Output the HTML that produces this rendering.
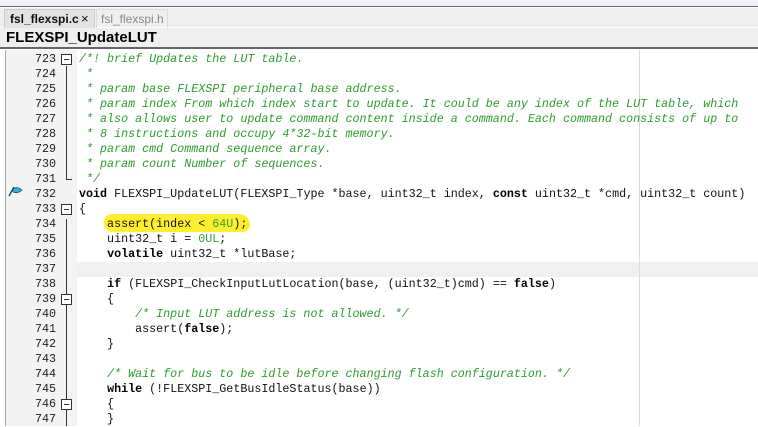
<!DOCTYPE html>
<html><head><meta charset="utf-8"><style>
*{margin:0;padding:0;box-sizing:border-box}
body{width:758px;height:426px;overflow:hidden;background:#fff;font-family:"Liberation Sans",sans-serif;position:relative}
.top{position:absolute;left:0;top:0;width:758px;height:7px;background:#eef0fb;border-bottom:1px solid #666}
.tabs{position:absolute;left:0;top:8px;width:758px;height:20px;background:#efefef;border-bottom:1px solid #fff}
.tab1{position:absolute;left:4px;top:1px;width:91px;height:19px;background:#e2e2e2;border:1px solid #ccc;border-bottom:none;font-size:12px;font-weight:bold;padding:2px 0 0 5px;color:#111}
.tab1 span{position:absolute;left:76px;top:1px;font-weight:normal;font-size:13px}
.tab2{position:absolute;left:96px;top:1px;width:72px;height:19px;border:1px solid #ddd;border-bottom:none;font-size:12px;color:#888;padding:2px 0 0 4px}
.title{position:absolute;left:0;top:28px;width:758px;height:21px;background:#efefef;border-bottom:2px solid #666;font-size:15px;font-weight:bold;padding:1px 0 0 6px;color:#000}
.ed{position:absolute;left:5px;top:50px;width:753px;height:376px;border-left:1px solid #aaa;background:#fff}
.gut{position:absolute;left:6px;top:50px;width:71px;height:376px;background:#f3f3f3}
.cur{position:absolute;left:77px;top:262px;width:681px;height:15px;background:#f0f0f0}
.guide{position:absolute;left:639px;top:50px;width:1px;height:376px;background:#ddd}
.hl{position:absolute;left:104px;top:214px;width:146px;height:18px;background:#ffef2a;border-radius:9px 12px 8px 10px}
.num{position:absolute;left:6px;top:52px;width:50px;text-align:right;font-family:"Liberation Mono",monospace;font-size:11.7px;line-height:15px;color:#222}
pre{position:absolute;left:79px;top:52px;font-family:"Liberation Mono",monospace;font-size:11.7px;line-height:15px;color:#111}
.c{color:#2f9a2f;font-style:italic}
.k{font-weight:bold;color:#000}
.n{color:#3a9a3a}
.fb{position:absolute;left:61px;width:11px;height:11px;border:1px solid #333;background:#fff}
.fb::after{content:"";position:absolute;left:2px;top:4px;width:5px;height:1px;background:#333}
.vl{position:absolute;left:66px;width:1px;background:#333}
.end{position:absolute;left:66px;width:6px;height:1px;background:#333}
</style></head><body>
<div class="top"></div>
<div class="tabs"><div class="tab1">fsl_flexspi.c<span>×</span></div><div class="tab2">fsl_flexspi.h</div></div>
<div class="title">FLEXSPI_UpdateLUT</div>
<div class="ed"></div><div class="gut"></div><div class="cur"></div><div class="guide"></div>
<div class="hl"></div>
<div class="num">723<br>724<br>725<br>726<br>727<br>728<br>729<br>730<br>731<br>732<br>733<br>734<br>735<br>736<br>737<br>738<br>739<br>740<br>741<br>742<br>743<br>744<br>745<br>746<br>747</div>
<div class="vl" style="top:66px;height:113px"></div><div class="end" style="top:179px"></div>
<div class="fb" style="top:54px"></div>
<div class="vl" style="top:219px;height:207px"></div>
<div class="fb" style="top:204px"></div>
<div class="fb" style="top:294px"></div>
<div class="fb" style="top:399px"></div>
<svg style="position:absolute;left:8px;top:185px" width="16" height="12"><path d="M1 11 L6 2" stroke="#146" stroke-width="1.3"/><path d="M5 4 Q9 1 14 5 Q10 9 5 7Z" fill="#2bb8d0" stroke="#157" stroke-width=".8"/></svg>
<pre><span class="c">/*! brief Updates the LUT table.
 *
 * param base FLEXSPI peripheral base address.
 * param index From which index start to update. It could be any index of the LUT table, which
 * also allows user to update command content inside a command. Each command consists of up to
 * 8 instructions and occupy 4*32-bit memory.
 * param cmd Command sequence array.
 * param count Number of sequences.
 */</span>
<span class="k">void</span> FLEXSPI_UpdateLUT(FLEXSPI_Type *base, uint32_t index, <span class="k">const</span> uint32_t *cmd, uint32_t count)
{
    assert(index &lt; <span class="n">64U</span>);
    uint32_t i = <span class="n">0UL</span>;
    <span class="k">volatile</span> uint32_t *lutBase;

    <span class="k">if</span> (FLEXSPI_CheckInputLutLocation(base, (uint32_t)cmd) == <span class="k">false</span>)
    {
        <span class="c">/* Input LUT address is not allowed. */</span>
        assert(<span class="k">false</span>);
    }

    <span class="c">/* Wait for bus to be idle before changing flash configuration. */</span>
    <span class="k">while</span> (!FLEXSPI_GetBusIdleStatus(base))
    {
    }</pre>
</body></html>
